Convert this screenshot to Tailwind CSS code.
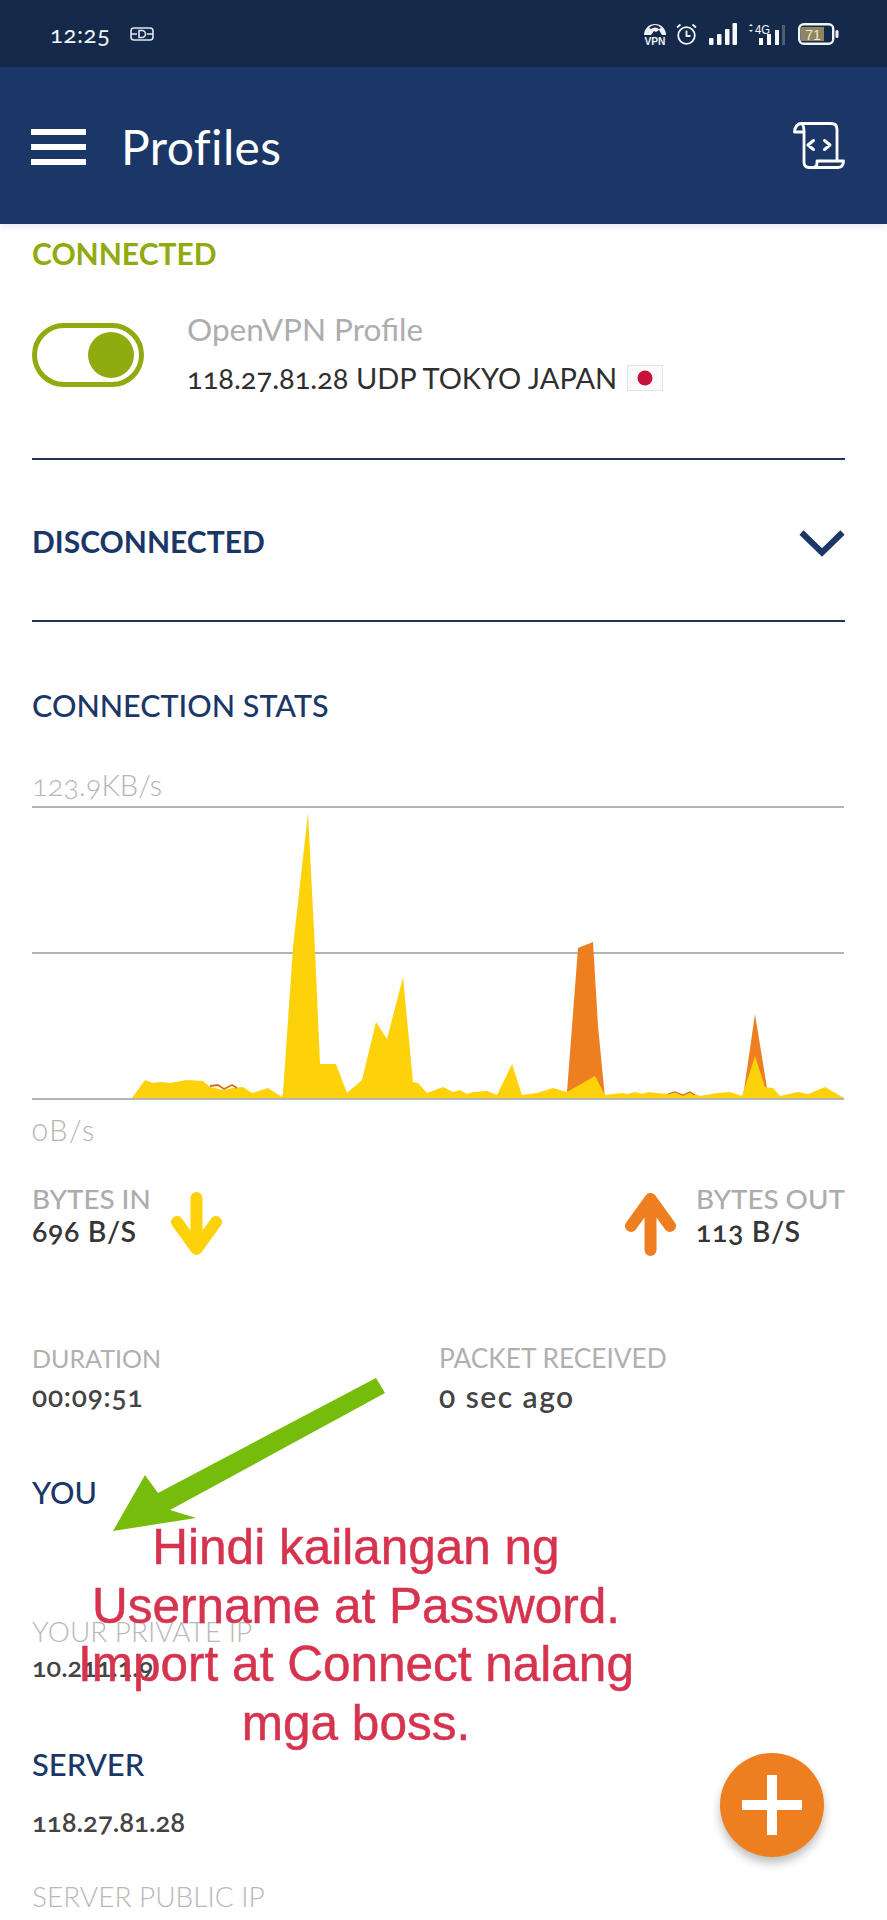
<!DOCTYPE html>
<html lang="en">
<head>
<meta charset="utf-8">
<title>Profiles</title>
<script src="https://cdn.jsdelivr.net/npm/@tailwindcss/browser@4"></script>
</head>
<body class="bg-white">
<div class="relative w-[887px] h-[1920px] overflow-hidden bg-white font-['Lato','Open_Sans',sans-serif] [font-feature-settings:'onum']">

  <!-- status bar -->
  <div class="h-[67px] bg-[#15294a] flex items-center justify-between pl-[50px] pr-[48px] text-[#f2f5f8]">
    <div class="flex items-center gap-[20px]">
      <span class="text-[24px] leading-[24px] font-normal tracking-[0.5px]">12:25</span>
      <svg class="w-[24px] h-[14px]" viewBox="0 0 24 14" fill="none" stroke="#dfe6ee" stroke-width="1.6"><rect x="1" y="1" width="22" height="12" rx="3"/><path d="M1 7h6M17 7h6M9 3.5h3a3.5 3.5 0 0 1 0 7H9zM9 3.5v7"/></svg>
    </div>
    <div class="flex items-center">
      <svg class="w-[22px] h-[23px] mr-[10px]" viewBox="0 0 22 23" fill="#eef2f6"><path fill-rule="evenodd" d="M0 13a11 11 0 0 1 22 0h-4l-3-5-3 2-2-1-3 4zM11 3a8 8 0 0 0-6 3l2 1a6 6 0 0 1 8 0l2-1a8 8 0 0 0-6-3z"/><text x="11" y="22.5" font-family="Liberation Sans" font-size="10" font-weight="700" text-anchor="middle" textLength="21" lengthAdjust="spacingAndGlyphs">VPN</text></svg>
      <svg class="w-[21px] h-[22px] mr-[12px]" viewBox="0 0 21 22" fill="none" stroke="#f2f5f8" stroke-width="1.8"><circle cx="10.5" cy="12.5" r="8.3"/><path d="M10.5 7.5v5.5h4M1 4.5l3.5-3M20 4.500l-3.500-3"/></svg>
      <svg class="w-[28px] h-[22px] mr-[10px]" viewBox="0 0 28 22" fill="#f6f8fa"><rect x="0" y="15" width="4.5" height="7" rx="1"/><rect x="8" y="11" width="4.5" height="11" rx="1"/><rect x="16" y="6" width="4.5" height="16" rx="1"/><rect x="23.5" y="0" width="4.5" height="22" rx="1"/></svg>
      <svg class="w-[38px] h-[22px] mr-[13px]" viewBox="0 0 38 22" fill="#f6f8fa"><path d="M2 3l2-2 2 2zM2 7l2 2 2-2z"/><text x="8" y="11" font-family="Liberation Sans" font-size="13" textLength="15" lengthAdjust="spacingAndGlyphs">4G</text><rect x="12" y="15" width="4" height="7"/><rect x="20" y="11" width="4" height="11"/><rect x="28" y="7" width="4" height="15"/><rect x="35" y="2" width="3" height="20" fill="#4d5d78"/></svg>
      <svg class="w-[41px] h-[22px]" viewBox="0 0 41 22"><rect x="1.2" y="1.2" width="34" height="19.6" rx="4.5" fill="#15294a" stroke="#f2f5f8" stroke-width="2.4"/><path d="M4 4h22v14H4a1 1 0 0 1-1-1V5a1 1 0 0 1 1-1z" fill="#8f8560"/><rect x="37.5" y="7" width="3" height="8" rx="1.5" fill="#f2f5f8"/><text x="15" y="16.5" font-family="Liberation Sans" font-size="14" text-anchor="middle" fill="#f2e9c8">71</text></svg>
    </div>
  </div>

  <!-- app bar -->
  <header class="h-[157px] bg-[#1a3767] flex items-center justify-between pl-[31px] pr-[42px] shadow-[0_3px_8px_rgba(40,90,140,0.12)] relative">
    <div class="flex items-center">
      <div class="w-[55px] flex flex-col gap-[9px] mt-[2px]">
        <div class="h-[6px] bg-white"></div>
        <div class="h-[6px] bg-white"></div>
        <div class="h-[6px] bg-white"></div>
      </div>
      <h1 class="ml-[35px] text-[48px] leading-[50px] font-normal tracking-[0.4px] text-white mt-[2px]">Profiles</h1>
    </div>
    <svg class="w-[52px] h-[47px]" viewBox="0 0 52 47" fill="none" stroke="#fff" stroke-width="2.8" stroke-linejoin="round" stroke-linecap="round"><path d="M11 10H1.5C2 4 5 1.5 9 1.5H38Q44 1.5 44 7.5V38"/><path d="M9 1.5C11 4 11 7 11 10V40Q11 45.5 16 45.5H45Q50.500 45 50.500 39H24V41Q24 45.500 19 45.500"/><path d="M20.500 18.500L15 23l5.500 4.500M31.500 18.500L37 23l-5.500 4.500" stroke-width="3"/></svg>
  </header>

  <!-- content -->
  <main class="pl-[32px] pr-[42px]">
    <h2 class="mt-[11px] text-[30px] leading-[36px] font-bold text-[#8fab10]">CONNECTED</h2>

    <div class="mt-[40px] flex items-start">
      <div class="mt-[12px] w-[112px] h-[64px] rounded-full border-[5px] border-[#8fab10] flex items-center justify-end pr-[5px]">
        <div class="w-[46px] h-[46px] rounded-full bg-[#8fab10]"></div>
      </div>
      <div class="ml-[43px]">
        <p class="text-[31.500px] leading-[36px] text-[#adadad]">OpenVPN Profile</p>
        <p class="mt-[13px] flex items-center text-[29px] leading-[36px] text-[#2f2f2f]">118.27.81.28 UDP TOKYO JAPAN
          <svg class="w-[36px] h-[26px] ml-[10px]" viewBox="0 0 36 26"><rect x="0.500" y="0.500" width="35" height="25" fill="#fafafa" stroke="#e3e3e3"/><circle cx="18" cy="13" r="7.500" fill="#c8103a"/></svg>
        </p>
      </div>
    </div>

    <div class="mt-[62px] h-[2px] bg-[#1e3557]"></div>

    <div class="mt-[63px] flex items-center justify-between h-[36px]">
      <h2 class="text-[30px] leading-[36px] font-bold text-[#1a3767]">DISCONNECTED</h2>
      <svg class="w-[46px] h-[28px] mt-[4px]" viewBox="0 0 46 28" fill="none" stroke="#1a3767" stroke-width="6"><path d="M2.500 3.500L23 23.500L43.500 3.500"/></svg>
    </div>

    <div class="mt-[61px] h-[2px] bg-[#1e3557]"></div>

    <h2 class="mt-[65px] text-[30.500px] leading-[36px] font-medium text-[#1a3767]">CONNECTION STATS</h2>

    <p class="mt-[44px] text-[29px] leading-[36px] font-light text-[#b5b5b5]">123.9KB/s</p>

    <div class="mt-[3px] h-[295px]">
      <svg class="block w-[813px] h-[295px]" viewBox="32 806 813 295">
        <path d="M32 807H844M32 953H844M32 1099H844" stroke="#b4b4b4" stroke-width="2" fill="none"/>
        <path d="M567 1092L578 948L593 942L598 1026L605 1098ZM743 1097L755 1014L767 1088Z" fill="#ee7f20"/>
        <path fill="#fdd20a" d="M132 1098L145 1080L153 1083L160 1082L170 1083L187 1080L203 1081L210 1087L223 1090L233 1088L243 1087L252 1093L268 1088L282 1097L283 1093L293 947L308 813L315 950L320 1064L336 1064L347 1093L362 1080L376 1022L387 1039L403 977L413 1082L418 1083L427 1093L443 1087L453 1092L460 1090L467 1094L473 1092L487 1091L497 1095L512 1064L522 1095L537 1093L553 1088L567 1092L595 1076L605 1095L622 1093L628 1094L635 1092L642 1094L648 1092L667 1094L675 1093L683 1095L690 1092L700 1096L717 1093L730 1092L742 1096L755 1056L765 1087L773 1088L780 1096L798 1092L808 1094L825 1087L844 1098Z"/>
        <path d="M210 1086L218 1085L224 1089L232 1085L237 1088" fill="none" stroke="#d9701c" stroke-width="1.800"/>
        <path d="M668 1094L675 1092L683 1095L690 1092L695 1095" fill="none" stroke="#c9701c" stroke-width="1.200"/>
      </svg>
    </div>

    <p class="mt-[11px] text-[29px] leading-[36px] font-light tracking-[1.5px] text-[#b5b5b5]">0B/s</p>

    <div class="mt-[36px] flex justify-between">
      <div class="flex">
        <div class="w-[139px]">
          <p class="text-[27.800px] leading-[30px] font-medium text-[#acacac] whitespace-nowrap">BYTES IN</p>
          <p class="mt-[2px] text-[28.500px] leading-[30px] font-semibold tracking-[0.6px] text-[#363636] whitespace-nowrap">696 B/S</p>
        </div>
        <svg class="w-[51px] h-[64px] mt-[8px]" viewBox="0 0 51 64" fill="none" stroke="#fdd20a" stroke-width="12" stroke-linecap="round" stroke-linejoin="round"><path d="M25.500 6V56M6 30L25.500 57L45 30"/></svg>
      </div>
      <div class="flex">
        <svg class="w-[51px] h-[64px] mt-[8px]" viewBox="0 0 51 64" fill="none" stroke="#ee7f20" stroke-width="12" stroke-linecap="round" stroke-linejoin="round"><path d="M25.500 58V8M6 34L25.500 7L45 34"/></svg>
        <div class="ml-[20px] w-[149px]">
          <p class="text-[27.800px] leading-[30px] font-medium text-[#acacac] whitespace-nowrap">BYTES OUT</p>
          <p class="mt-[2px] text-[28.500px] leading-[30px] font-semibold tracking-[0.6px] text-[#363636] whitespace-nowrap">113 B/S</p>
        </div>
      </div>
    </div>

    <div class="mt-[87px] flex">
      <div class="w-[407px]">
        <p class="text-[25px] leading-[30px] font-normal text-[#b0b0b0]">DURATION</p>
        <p class="mt-[8px] text-[28px] leading-[30px] font-semibold tracking-[0.8px] text-[#444]">00:09:51</p>
      </div>
      <div>
        <p class="text-[26.300px] leading-[30px] font-normal text-[#b0b0b0]">PACKET RECEIVED</p>
        <p class="mt-[8px] text-[30px] leading-[30px] font-semibold tracking-[1.5px] text-[#444]">0 sec ago</p>
      </div>
    </div>

    <h3 class="mt-[63px] text-[30.500px] leading-[36px] font-medium text-[#1a3767]">YOU</h3>

    <p class="mt-[106px] text-[28px] leading-[30px] font-light text-[#b8b8b8]">YOUR PRIVATE IP</p>
    <p class="mt-[6px] text-[27px] leading-[30px] font-semibold text-[#444]">10.211.1.9</p>

    <h3 class="mt-[64px] text-[31px] leading-[36px] font-medium text-[#1a3767]">SERVER</h3>

    <p class="mt-[25px] text-[27.500px] leading-[30px] font-semibold text-[#444]">118.27.81.28</p>

    <p class="mt-[44px] text-[28px] leading-[30px] font-light text-[#b8b8b8]">SERVER PUBLIC IP</p>
  </main>

  <!-- annotation: green arrow -->
  <svg class="absolute left-0 top-0 pointer-events-none" width="887" height="1920" viewBox="0 0 887 1920"><path fill="#76bc0a" d="M376 1378L385 1393L170 1510L196 1518L113 1531L145 1475L158 1493Z"/></svg>

  <!-- annotation: red text -->
  <div class="absolute left-[56px] top-[1518px] w-[600px] text-center font-['Liberation_Sans',Arial,sans-serif] text-[49.500px] leading-[58.500px] text-[#d6334f] [-webkit-text-stroke:0.5px_#d6334f] [font-feature-settings:normal]">
    <p>Hindi kailangan ng</p>
    <p>Username at Password.</p>
    <p>Import at Connect nalang</p>
    <p>mga boss.</p>
  </div>

  <!-- floating action button -->
  <button class="absolute left-[720px] top-[1753px] w-[104px] h-[104px] rounded-full bg-[#ee7f20] shadow-[0_6px_10px_rgba(0,0,0,0.25)] flex items-center justify-center">
    <svg class="w-[60px] h-[60px]" viewBox="0 0 60 60" fill="#fff"><path d="M25 0h10v25h25v10H35v25H25V35H0V25h25z"/></svg>
  </button>
</div>
</body>
</html>
